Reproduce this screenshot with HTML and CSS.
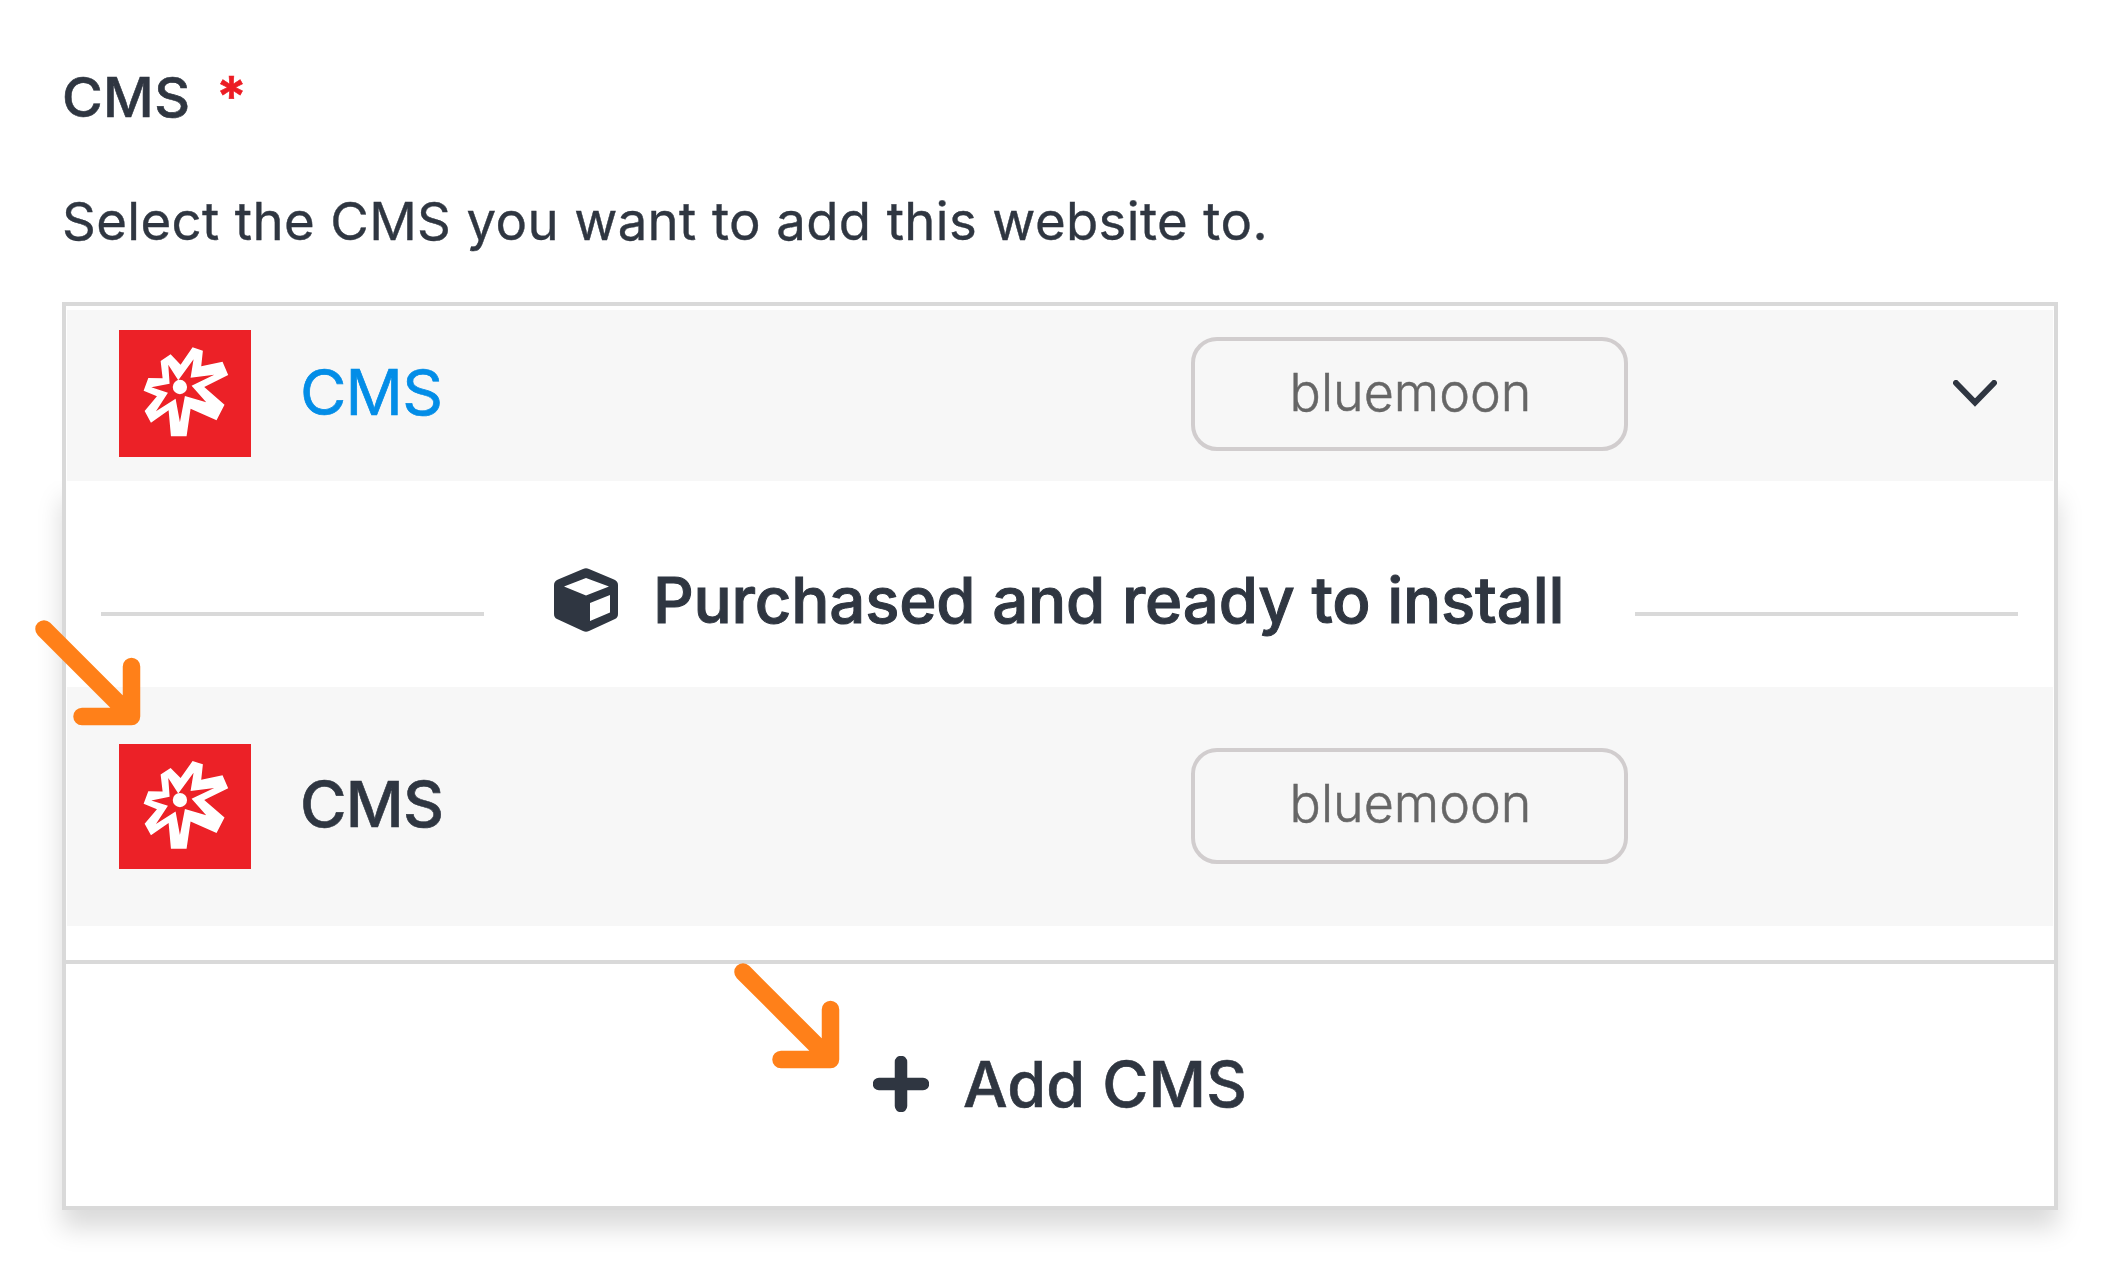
FILE: index.html
```html
<!DOCTYPE html>
<html lang="en">
<head>
<meta charset="utf-8">
<title>CMS</title>
<link rel="stylesheet" href="styles.css">
</head>
<body>
<svg class="defs" aria-hidden="true">
  <symbol id="logo" viewBox="0 0 395 381" preserveAspectRatio="none">
    <path fill="#fff" d="M221 52 252 62 247 109 311 95 328 135 256 171 317 224 293 271 215 236 203 319H156L149 241 96 278 77 243 114 199 74 182 88 144 131 145 125 93 155 73 185 104Z"/>
    <path fill="#ec2127" d="M224 88 215 143 286 134 218 167 262 217 198 198 183 277 170 206 111 244 147 188 97 172 152 161 148 104 178 151Z"/>
    <circle cx="183" cy="171" r="21.500" fill="#fff"/>
  </symbol>
  <symbol id="arrow" viewBox="0 0 106 106">
    <path d="M9 9 96.500 96.500M96.500 46.500V96.500H47" fill="none" stroke="#ff8019" stroke-width="17.500" stroke-linecap="round" stroke-linejoin="round"/>
  </symbol>
</svg>
<main class="field">
  <div class="label"><span>CMS</span><span class="required">*</span></div>
  <p class="hint">Select the CMS you want to add this website to.</p>
  <div class="select">
    <div class="row selected">
      <svg class="logo"><use href="#logo"/></svg>
      <span class="name">CMS</span>
      <span class="tag">bluemoon</span>
      <svg class="chevron" viewBox="0 0 44 28"><path d="M3 3 22 22.500 41 3" fill="none" stroke="#2f3641" stroke-width="6" stroke-linecap="round"/></svg>
    </div>
    <div class="menu">
      <div class="group">
        <span class="line"></span>
        <svg class="cube" viewBox="0 0 64 64"><path fill="#2f3641" fill-rule="evenodd" d="M29 1Q32-.5 35 1L60 11.500Q64 13 64 17V46Q64 49.500 61 51L35 63Q32 64.500 29 63L3 51Q0 49.500 0 46V17Q0 13 4 11.500ZM32 10 10 18.500 32 27.500 55 18.500ZM36 35V53L56 44.500V27Z"/></svg>
        <span class="title">Purchased and ready to install</span>
        <span class="line"></span>
      </div>
      <div class="row option">
        <svg class="logo"><use href="#logo"/></svg>
        <span class="name">CMS</span>
        <span class="tag">bluemoon</span>
      </div>
      <div class="add">
        <svg class="plus" viewBox="0 0 56 56"><path d="M28 6V50M6 28H50" stroke="#2f3641" stroke-width="12.500" stroke-linecap="round"/></svg>
        <span class="add-text">Add CMS</span>
      </div>
    </div>
  </div>
</main>
<svg class="arrow arrow-option"><use href="#arrow"/></svg>
<svg class="arrow arrow-add"><use href="#arrow"/></svg>
</body>
</html>
```
FILE: styles.css
```css
* { box-sizing: border-box; }
body { margin: 0; width: 2122px; height: 1276px; overflow: hidden; background: #fff; color: #2f3641; font-family: Inter, sans-serif; position: relative; }
.defs { display: none; }
svg { display: block; flex: none; }
.field { padding: 62px 64px 0 62px; }
.label { display: flex; gap: 26px; height: 70px; line-height: 70px; font-size: 55.500px; font-weight: 500; letter-spacing: .4px; -webkit-text-stroke: .6px; }
.required { color: #ec1c24; font-weight: 600; line-height: 68px; }
.hint { margin: 54px 0 0; height: 70px; line-height: 70px; font-size: 52.700px; letter-spacing: .38px; -webkit-text-stroke: .4px; white-space: nowrap; }
.select { margin-top: 46px; width: 1996px; height: 907.500px; display: flex; flex-direction: column; border: 4px solid #d9d9d9; border-bottom: 0; }
.row { display: flex; align-items: center; background: #f7f7f7; margin: 0 1px; padding-left: 52px; }
.selected { margin-top: 4px; height: 171px; padding-bottom: 4px; flex: none; }
.logo { width: 131.500px; height: 127px; background: #ec2127; }
.name { margin-left: 49.500px; width: 891px; font-size: 63.500px; letter-spacing: -.8px; line-height: 80px; padding-bottom: 3px; }
.selected .name { color: #038de7; font-weight: 400; -webkit-text-stroke: .7px; }
.tag { flex: none; width: 437px; height: 114px; border: 4px solid #d1cdce; border-radius: 26px; color: #666; font-size: 52px; font-weight: 300; -webkit-text-stroke: .5px; line-height: 104px; text-align: center; padding-left: 2px; }
.chevron { width: 44px; height: 28px; margin-left: 324.500px; }
.menu { flex: 1; position: relative; margin: 0 -4px; border: solid #d9d9d9; border-width: 0 4px 4px; box-shadow: 0 18px 24px rgba(0,0,0,.15); clip-path: inset(0 -60px -70px -60px); }
.group { display: flex; align-items: center; height: 206px; padding: 32px 36px 0 35px; }
.line { flex: none; width: 383px; height: 4px; margin-top: 28px; background: #d9d9d9; }
.cube { width: 64px; height: 64px; margin: 0 35px 0 70px; }
.title { width: 983px; font-size: 63.500px; font-weight: 500; letter-spacing: -.17px; -webkit-text-stroke: 1px; line-height: 80px; white-space: nowrap; }
.option { height: 239px; padding-bottom: 1px; }
.option .logo { height: 125px; }
.option .name { font-weight: 500; -webkit-text-stroke: .6px; padding-bottom: 5px; }
.option .tag { height: 116px; }
.add { display: flex; align-items: center; margin-top: 34px; height: 245px; border-top: 4px solid #d9d9d9; padding: 0 0 2px 807px; }
.plus { width: 56px; height: 56px; }
.add-text { margin-left: 34px; font-size: 63px; font-weight: 500; letter-spacing: .1px; -webkit-text-stroke: .6px; white-space: nowrap; }
.arrow { position: absolute; width: 106px; height: 106px; }
.arrow-option { left: 35px; top: 619.500px; }
.arrow-add { left: 734px; top: 962.500px; }
```
